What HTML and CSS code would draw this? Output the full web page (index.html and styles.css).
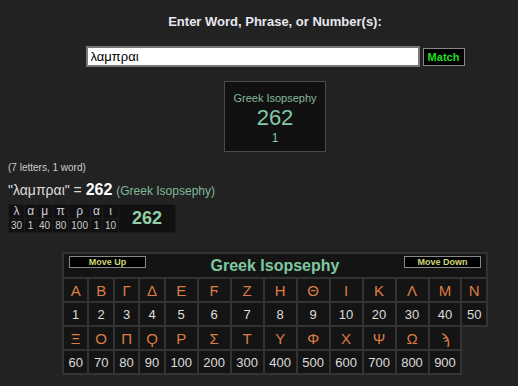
FILE: index.html
```html
<!DOCTYPE html>
<html lang="en">
<head>
    <meta charset="UTF-8">
    <meta name="viewport" content="width=device-width, initial-scale=1.0">
    <title>Gematria</title>
    <link rel="stylesheet" href="styles.css">
</head>
<body>
    <div class="center">
        <div class="prompt">Enter Word, Phrase, or Number(s):</div>
        <!--search form-->
        <form class="search" action="javascript:void(0)">
            <input type="text" id="txt" value="λαμπραι">
            <button type="button" class="match">Match</button>
        </form>
        <!--result box-->
        <div class="result">
            <div class="result-name">Greek Isopsephy</div>
            <div class="result-total">262</div>
            <div class="result-count">1</div>
        </div>
    </div>

    <div class="info">(7 letters, 1 word)</div>
    <div class="equation">"λαμπραι" = <b>262</b> <span class="cipher">(Greek Isopsephy)</span></div>

    <table class="breakdown">
        <tr>
            <td>λ</td><td>α</td><td>μ</td><td>π</td><td>ρ</td><td>α</td><td>ι</td>
            <td class="sum" rowspan="2">262</td>
        </tr>
        <tr class="vals">
            <td>30</td><td>1</td><td>40</td><td>80</td><td>100</td><td>1</td><td>10</td>
        </tr>
    </table>

    <div class="center">
        <table class="chart">
            <tr>
                <td colspan="14" class="chart-head">
                    <div class="head-row">
                        <button type="button" class="move">Move Up</button>
                        <span class="chart-title">Greek Isopsephy</span>
                        <button type="button" class="move">Move Down</button>
                    </div>
                </td>
            </tr>
            <tr class="letters">
                <td>Α</td><td>Β</td><td>Γ</td><td>Δ</td><td>Ε</td><td>Ϝ</td><td>Ζ</td><td>Η</td><td>Θ</td><td>Ι</td><td>Κ</td><td>Λ</td><td>Μ</td><td>Ν</td>
            </tr>
            <tr class="nums">
                <td>1</td><td>2</td><td>3</td><td>4</td><td>5</td><td>6</td><td>7</td><td>8</td><td>9</td><td>10</td><td>20</td><td>30</td><td>40</td><td>50</td>
            </tr>
            <tr class="letters">
                <td>Ξ</td><td>Ο</td><td>Π</td><td>Ϙ</td><td>Ρ</td><td>Σ</td><td>Τ</td><td>Υ</td><td>Φ</td><td>Χ</td><td>Ψ</td><td>Ω</td><td>ϡ</td>
            </tr>
            <tr class="nums">
                <td>60</td><td>70</td><td>80</td><td>90</td><td>100</td><td>200</td><td>300</td><td>400</td><td>500</td><td>600</td><td>700</td><td>800</td><td>900</td>
            </tr>
        </table>
    </div>
</body>
</html>
```

FILE: styles.css
```css
body {
    font-family: 'Liberation Sans', Arial, sans-serif;
    background-color: #222222;
    color: #dddddd;
    margin: 8px;
}

.center {
    padding-left: 32px;
    display: flex;
    flex-direction: column;
    align-items: center;
}

.prompt {
    margin-top: 6px;
    font-size: 13px;
    line-height: 15px;
    font-weight: bold;
    color: #e8e8f0;
}

.search {
    margin: 17px 0 0 0;
    display: flex;
    align-items: center;
    gap: 3px;
}

.search input[type="text"] {
    width: 334px;
    height: 21px;
    box-sizing: border-box;
    border: 2px solid #777;
    background: #fff;
    font-family: 'Liberation Sans', Arial, sans-serif;
    font-size: 13px;
    padding: 0 3px;
    color: #000;
}

.match {
    height: 18px;
    width: 42px;
    padding: 0;
    background-color: #000;
    border: 1px solid #888;
    color: #22dd22;
    font-family: 'Liberation Sans', Arial, sans-serif;
    font-size: 11px;
    font-weight: bold;
}

.result {
    margin-top: 14px;
    width: 102px;
    height: 71px;
    box-sizing: border-box;
    border: 1px solid #4a4a4a;
    background-color: #111;
    text-align: center;
    color: #84c8a4;
    padding-top: 9px;
}

.result-name {
    font-size: 11px;
    line-height: 14px;
    color: #86b89c;
}

.result-total {
    margin-top: 2px;
    font-size: 22px;
    line-height: 22px;
}

.result-count {
    margin-top: 3px;
    font-size: 12px;
    line-height: 12px;
}

.info {
    margin-top: 10px;
    font-size: 10px;
    line-height: 12px;
    color: #cccccc;
}

.equation {
    margin-top: 7px;
    font-size: 14px;
    line-height: 18px;
    color: #dddddd;
}

.equation b {
    font-size: 16px;
    color: #fff;
}

.cipher {
    font-size: 12px;
    color: #7fb89a;
}

.breakdown {
    margin-top: 4px;
    border-collapse: separate;
    border-spacing: 1px;
    background-color: #1c1c1c;
}

.breakdown td {
    background-color: #111;
    text-align: center;
    font-size: 12px;
    line-height: 13px;
    padding: 0 2px;
    color: #ccccdd;
}

.breakdown .vals td {
    font-size: 10px;
    color: #cccccc;
}

.breakdown .sum {
    width: 52px;
    font-size: 18px;
    font-weight: bold;
    color: #8fd0a8;
}

.chart {
    margin-top: 19px;
    width: 426px;
    border-collapse: collapse;
}

.chart td {
    background-color: #141414;
    border: 2px solid #333;
    text-align: center;
    padding: 0 4px;
    height: 22px;
}

.chart-head {
    padding: 0 !important;
}

.head-row {
    display: flex;
    justify-content: space-between;
    align-items: flex-start;
    padding: 1px 5px 0 5px;
    height: 22px;
}

.move {
    margin-top: 1px;
    width: 77px;
    height: 12px;
    padding: 0;
    background-color: #000;
    border: 1px solid #888;
    color: #cfd67a;
    font-family: 'Liberation Sans', Arial, sans-serif;
    font-size: 9px;
    font-weight: bold;
    line-height: 9px;
}

.chart-title {
    font-size: 16px;
    line-height: 22px;
    font-weight: bold;
    color: #7ec8a0;
}

.letters td {
    font-size: 15px;
    color: #dd7d45;
}

.nums td {
    font-size: 13px;
    color: #dddddd;
}
```
